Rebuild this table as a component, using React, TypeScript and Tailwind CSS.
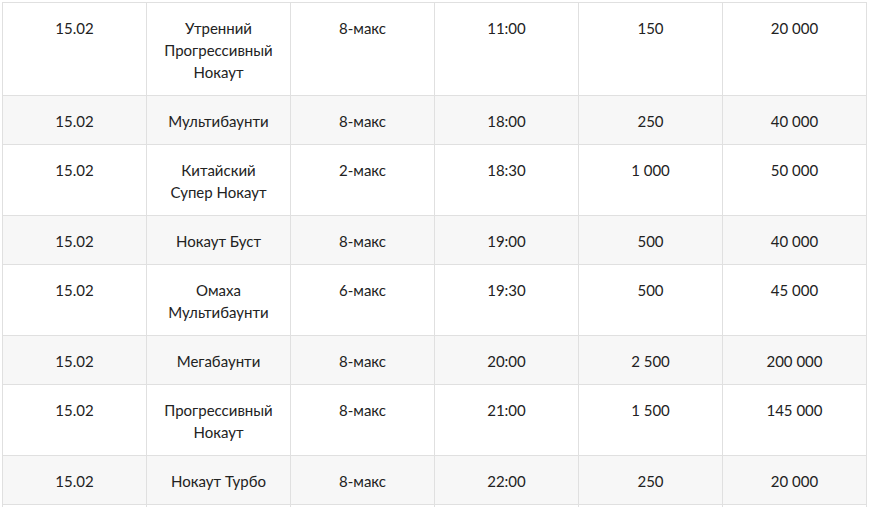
const rows = [
  ['15.02', 'Утренний Прогрессивный Нокаут', '8-макс', '11:00', '150', '20 000'],
  ['15.02', 'Мультибаунти', '8-макс', '18:00', '250', '40 000'],
  ['15.02', 'Китайский Супер Нокаут', '2-макс', '18:30', '1 000', '50 000'],
  ['15.02', 'Нокаут Буст', '8-макс', '19:00', '500', '40 000'],
  ['15.02', 'Омаха Мультибаунти', '6-макс', '19:30', '500', '45 000'],
  ['15.02', 'Мегабаунти', '8-макс', '20:00', '2 500', '200 000'],
  ['15.02', 'Прогрессивный Нокаут', '8-макс', '21:00', '1 500', '145 000'],
  ['15.02', 'Нокаут Турбо', '8-макс', '22:00', '250', '20 000'],
]

export default function App() {
  return (
    <div
      className="bg-white pl-[2px] pt-[2px] text-[#222]"
      style={{ fontFamily: 'Lato, "Open Sans", sans-serif' }}
    >
      <table className="w-[865px] table-fixed border-collapse text-[15px] leading-[22px]">
        <tbody>
          {rows.map((row, i) => (
            <tr key={i} className={i % 2 === 1 ? 'bg-[#f7f7f7]' : 'bg-white'}>
              {row.map((cell, j) => (
                <td
                  key={j}
                  className="w-[144px] border border-[#e0e0e0] px-3 pt-[14px] pb-[12px] text-center align-top"
                >
                  {cell}
                </td>
              ))}
            </tr>
          ))}
          <tr className="bg-white">
            {rows[0].map((_, j) => (
              <td key={j} className="h-[40px] border border-[#e0e0e0]" />
            ))}
          </tr>
        </tbody>
      </table>
    </div>
  )
}
